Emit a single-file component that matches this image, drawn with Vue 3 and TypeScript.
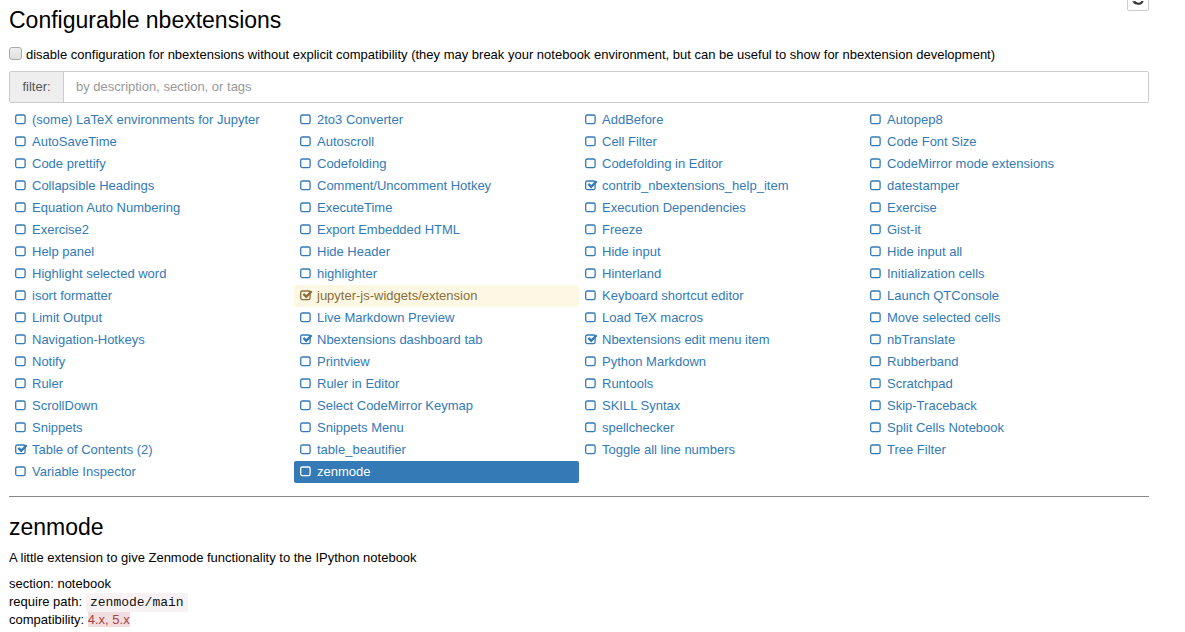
<script setup lang="ts">
import { ref } from 'vue';

interface Ext {
  name: string;
  on?: boolean;
  warn?: boolean;
}

const extensions: Ext[] = [
  { name: '(some) LaTeX environments for Jupyter' },
  { name: '2to3 Converter' },
  { name: 'AddBefore' },
  { name: 'Autopep8' },
  { name: 'AutoSaveTime' },
  { name: 'Autoscroll' },
  { name: 'Cell Filter' },
  { name: 'Code Font Size' },
  { name: 'Code prettify' },
  { name: 'Codefolding' },
  { name: 'Codefolding in Editor' },
  { name: 'CodeMirror mode extensions' },
  { name: 'Collapsible Headings' },
  { name: 'Comment/Uncomment Hotkey' },
  { name: 'contrib_nbextensions_help_item', on: true },
  { name: 'datestamper' },
  { name: 'Equation Auto Numbering' },
  { name: 'ExecuteTime' },
  { name: 'Execution Dependencies' },
  { name: 'Exercise' },
  { name: 'Exercise2' },
  { name: 'Export Embedded HTML' },
  { name: 'Freeze' },
  { name: 'Gist-it' },
  { name: 'Help panel' },
  { name: 'Hide Header' },
  { name: 'Hide input' },
  { name: 'Hide input all' },
  { name: 'Highlight selected word' },
  { name: 'highlighter' },
  { name: 'Hinterland' },
  { name: 'Initialization cells' },
  { name: 'isort formatter' },
  { name: 'jupyter-js-widgets/extension', on: true, warn: true },
  { name: 'Keyboard shortcut editor' },
  { name: 'Launch QTConsole' },
  { name: 'Limit Output' },
  { name: 'Live Markdown Preview' },
  { name: 'Load TeX macros' },
  { name: 'Move selected cells' },
  { name: 'Navigation-Hotkeys' },
  { name: 'Nbextensions dashboard tab', on: true },
  { name: 'Nbextensions edit menu item', on: true },
  { name: 'nbTranslate' },
  { name: 'Notify' },
  { name: 'Printview' },
  { name: 'Python Markdown' },
  { name: 'Rubberband' },
  { name: 'Ruler' },
  { name: 'Ruler in Editor' },
  { name: 'Runtools' },
  { name: 'Scratchpad' },
  { name: 'ScrollDown' },
  { name: 'Select CodeMirror Keymap' },
  { name: 'SKILL Syntax' },
  { name: 'Skip-Traceback' },
  { name: 'Snippets' },
  { name: 'Snippets Menu' },
  { name: 'spellchecker' },
  { name: 'Split Cells Notebook' },
  { name: 'Table of Contents (2)', on: true },
  { name: 'table_beautifier' },
  { name: 'Toggle all line numbers' },
  { name: 'Tree Filter' },
  { name: 'Variable Inspector' },
  { name: 'zenmode' },
];

const selected = ref('zenmode');
const filter = ref('');
const disableCompat = ref(false);
</script>

<template>
  <div class="page">
    <button type="button" class="reload" aria-label="reload">
      <svg width="14" height="14" viewBox="0 0 14 14">
        <path d="M1.2 9.3h3.4c.8 1 1.8 1.4 3 1.4 1.1 0 2-.4 2.6-1.2l.3-.6h2.2c-.9 2.6-3 3.9-5.4 3.9-2.2 0-3.9-.7-5-2z" fill="#333" />
      </svg>
    </button>

    <h3 class="title">Configurable nbextensions</h3>

    <label class="compat">
      <input v-model="disableCompat" type="checkbox" />
      <span>disable configuration for nbextensions without explicit compatibility (they may break your notebook environment, but can be useful to show for nbextension development)</span>
    </label>

    <div class="filter">
      <span class="filter-label">filter:</span>
      <input v-model="filter" class="filter-input" type="text" placeholder="by description, section, or tags" />
    </div>

    <ul class="ext-list">
      <li v-for="ext in extensions" :key="ext.name">
        <a
          href="#"
          class="ext"
          :class="{ warn: ext.warn, active: ext.name === selected }"
          @click.prevent="selected = ext.name"
        >
          <svg class="box" width="14" height="14" viewBox="0 0 14 14">
            <rect x=".7" y="2" width="9.4" height="8.6" rx="1.6" fill="none" stroke="currentColor" stroke-width="1.3" />
            <path
              v-if="ext.on"
              d="M2.6 5.7l1.6-1.6 2 2L10.9 1.4l1.6 1.6-6.3 6.4z"
              fill="currentColor"
            />
          </svg>
          <span>{{ ext.name }}</span>
        </a>
      </li>
    </ul>

    <hr class="rule" />

    <h3 class="detail-title">zenmode</h3>
    <p class="desc">A little extension to give Zenmode functionality to the IPython notebook</p>
    <div class="meta">
      <div>section: notebook</div>
      <div class="path-line">require path: <code>zenmode/main</code></div>
      <div>compatibility: <span class="compat-tag">4.x, 5.x</span></div>
    </div>
  </div>
</template>

<style>
html,
body {
  margin: 0;
  background: #fff;
}
</style>

<style scoped>
.page {
  position: relative;
  width: 1140px;
  margin-left: 9px;
  padding-top: 7px;
  font-family: "Liberation Sans", Arial, sans-serif;
  font-size: 13px;
  line-height: 18px;
  color: #000;
}
.reload {
  position: absolute;
  top: -13px;
  right: 0;
  width: 22px;
  height: 24px;
  padding: 0;
  border: 1px solid #ccc;
  border-radius: 2px;
  background: #fff;
  display: flex;
  align-items: center;
  justify-content: center;
}
.title {
  margin: 0 0 13px;
  font-size: 23px;
  font-weight: 500;
  line-height: 26px;
}
.compat {
  display: flex;
  align-items: center;
  gap: 4px;
  height: 18px;
  white-space: nowrap;
}
.compat input {
  appearance: none;
  flex: none;
  box-sizing: border-box;
  width: 13px;
  height: 13px;
  margin: 0;
  position: relative;
  top: -2px;
  border: 1px solid #aaa;
  border-radius: 3px;
  background: linear-gradient(#efefef, #e0e0e0);
}
.filter {
  display: flex;
  height: 32px;
  margin-top: 7px;
  box-sizing: border-box;
  border: 1px solid #ccc;
  border-radius: 2px;
}
.filter-label {
  flex: none;
  width: 54px;
  box-sizing: border-box;
  border-right: 1px solid #ccc;
  background: #eee;
  color: #555;
  text-align: center;
  line-height: 30px;
}
.filter-input {
  flex: 1;
  min-width: 0;
  padding: 0 12px;
  border: 0;
  outline: 0;
  font: inherit;
  color: #555;
}
.filter-input::placeholder {
  color: #999;
  opacity: 1;
}
.ext-list {
  display: grid;
  grid-template-columns: repeat(4, 285px);
  grid-auto-rows: 22px;
  margin: 6px 0 0;
  padding: 0;
  list-style: none;
}
.ext {
  display: flex;
  align-items: center;
  height: 22px;
  padding: 0 6px;
  border-radius: 2px;
  color: #337ab7;
  text-decoration: none;
}
.ext .box {
  flex: none;
  margin-right: 3px;
}
.ext.warn {
  background: #fcf8e3;
  color: #8a6d3b;
}
.ext.active {
  background: #337ab7;
  color: #fff;
}
.rule {
  height: 1px;
  margin: 13px 0 0;
  border: 0;
  background: #888;
}
.detail-title {
  margin: 17px 0 0;
  font-size: 23px;
  font-weight: 500;
  line-height: 26px;
}
.desc {
  margin: 9px 0 0;
}
.meta {
  margin-top: 8px;
}
.path-line {
  height: 18px;
}
code {
  margin-left: 0.4px;
  padding: 2px 4px;
  border-radius: 2px;
  background: #f9f2f4;
  color: #111;
  font-family: "Liberation Mono", monospace;
  font-size: 13px;
}
.compat-tag {
  background: #f2dede;
  color: #a94442;
}
</style>
